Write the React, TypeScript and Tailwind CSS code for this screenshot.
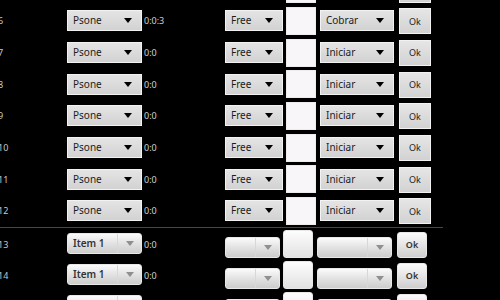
const font = { fontFamily: '"Noto Sans", "Open Sans", sans-serif' }

// row 5 sits above the fold, only its lower edge shows
const topRows = [
  { n: 5, t: '', s: '', hidden: true },
  { n: 6, t: '0:0:3', s: 'Cobrar' },
  { n: 7, t: '0:0', s: 'Iniciar' },
  { n: 8, t: '0:0', s: 'Iniciar' },
  { n: 9, t: '0:0', s: 'Iniciar' },
  { n: 10, t: '0:0', s: 'Iniciar' },
  { n: 11, t: '0:0', s: 'Iniciar' },
  { n: 12, t: '0:0', s: 'Iniciar' },
]

const Arrow = ({ color = 'border-t-black' }: { color?: string }) => (
  <span className={`w-0 h-0 border-x-[4px] border-x-transparent border-t-[5px] ${color}`} />
)

const FlatSpinner = ({ label, w }: { label: string; w: string }) => (
  <div className={`${w} h-[21px] flex items-center justify-between pl-[5px] pr-[9px] border border-[#f2f2f2] bg-gradient-to-b from-[#e4e4e4] to-[#d2d2d2] text-[10px] text-[#1c1c1c]`}>
    <span>{label}</span>
    <Arrow />
  </div>
)

const RoundSpinner = ({ label, w }: { label: string; w: string }) => (
  <div className={`${w} h-[21px] flex items-center rounded-[3px] border border-[#e8e8e8] bg-gradient-to-b from-[#fbfbfb] via-[#e2e2e2] to-[#cdcdcd] text-[10px] text-[#333]`}>
    <span className="flex-1 pl-[5px] font-semibold">{label}</span>
    <span className="w-[24px] h-full flex items-center justify-center border-l border-[#d8d8d8]">
      <Arrow color="border-t-[#8f8f8f]" />
    </span>
  </div>
)

function TopRow({ n, t, s, hidden }: { n: number; t: string; s: string; hidden?: boolean }) {
  return (
    <div className="h-[31.67px] flex items-center">
      <div className="w-[69px] -ml-[2px] text-[9px] text-[#c8c8c8]">{hidden ? '' : n}</div>
      <FlatSpinner label={hidden ? '' : 'Psone'} w="w-[75px]" />
      <div className="w-[83px] pl-[2px] text-[9px] text-[#d0d0d0]">{t}</div>
      <FlatSpinner label={hidden ? '' : 'Free'} w="w-[58px]" />
      <div className="ml-[3px] w-[30px] h-[28px] bg-[#f9f6f9] border border-[#eeeaee]" />
      <div className="ml-[4px]">
        <FlatSpinner label={s} w="w-[74px]" />
      </div>
      <div className="ml-[5px] mt-[1px] w-[32px] h-[26px] flex items-center justify-center border border-[#f2f2f2] bg-gradient-to-b from-[#e6e6e6] to-[#d2d2d2] text-[9px] text-[#222]">
        {hidden ? '' : 'Ok'}
      </div>
    </div>
  )
}

function BottomRow({ n, hidden }: { n: number; hidden?: boolean }) {
  return (
    <div className="h-[31px] flex items-start">
      <div className="w-[69px] -ml-[2px] mt-[10px] text-[9px] text-[#c8c8c8]">{hidden ? '' : n}</div>
      <div className="mt-[5px]">
        <RoundSpinner label={hidden ? '' : 'Item 1'} w="w-[75px]" />
      </div>
      <div className="w-[83px] pl-[2px] mt-[10px] text-[9px] text-[#d0d0d0]">{hidden ? '' : '0:0'}</div>
      <div className="mt-[9px]">
        <RoundSpinner label="" w="w-[55px]" />
      </div>
      <div className="ml-[3px] mt-[2px] w-[30px] h-[28px] rounded-[3px] border border-[#e8e8e8] bg-gradient-to-b from-[#fdfdfd] to-[#e2e2e2]" />
      <div className="ml-[4px] mt-[9px]">
        <RoundSpinner label="" w="w-[75px]" />
      </div>
      <div className="ml-[5px] mt-[4px] w-[30px] h-[26px] flex items-center justify-center rounded-[3px] border border-[#e8e8e8] bg-gradient-to-b from-[#fbfbfb] to-[#cfcfcf] text-[9px] font-semibold text-[#333]">
        {hidden ? '' : 'Ok'}
      </div>
    </div>
  )
}

export default function App() {
  return (
    <div className="w-[500px] h-[300px] bg-black overflow-hidden" style={font}>
      <div className="-mt-[26.5px] flex flex-col">
        {topRows.map((r) => (
          <TopRow key={r.n} {...r} />
        ))}
        <div className="h-[1px] w-[443px] bg-[#474747]" />
        <BottomRow n={13} />
        <BottomRow n={14} />
        <BottomRow n={15} hidden />
      </div>
    </div>
  )
}
